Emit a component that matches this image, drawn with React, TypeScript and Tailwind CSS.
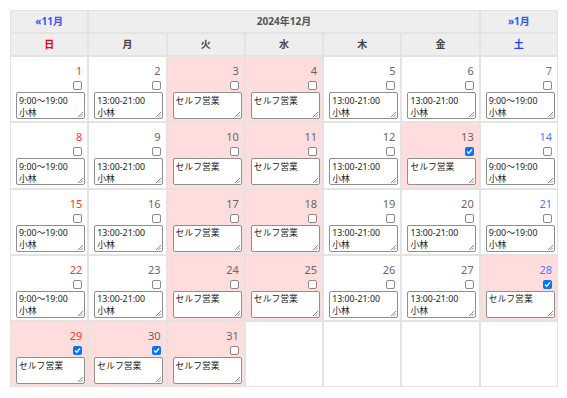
import React from "react";

type Day = {
  date: number;
  note: string[];
  self: boolean;
  checked: boolean;
};

const SELF_DAYS = [3, 4, 10, 11, 13, 17, 18, 24, 25, 28, 29, 30, 31];
const CHECKED_DAYS = [13, 28, 29, 30];

const buildDays = (): (Day | null)[] => {
  const days: (Day | null)[] = [];
  for (let d = 1; d <= 31; d++) {
    const dow = (d - 1) % 7; // 2024/12/1 is a Sunday
    const self = SELF_DAYS.includes(d);
    const weekend = dow === 0 || dow === 6;
    days.push({
      date: d,
      self,
      checked: CHECKED_DAYS.includes(d),
      note: self ? ["セルフ営業"] : [weekend ? "9:00～19:00" : "13:00-21:00", "小林"],
    });
  }
  while (days.length < 35) days.push(null);
  return days;
};

const WEEK = ["日", "月", "火", "水", "木", "金", "土"];

const Checkbox = ({ checked }: { checked: boolean }) =>
  checked ? (
    <span className="flex h-[9px] w-[9px] items-center justify-center rounded-[2px] bg-[#0075ff]">
      <svg width="7" height="7" viewBox="0 0 7 7">
        <path d="M1 3.6 L2.8 5.3 L6 1.5" stroke="white" strokeWidth="1.4" fill="none" />
      </svg>
    </span>
  ) : (
    <span className="block h-[9px] w-[9px] rounded-[2px] border border-[#8a8a8a] bg-white" />
  );

const NoteBox = ({ lines }: { lines: string[] }) => (
  <div className="relative mt-[2px] h-[27px] w-[69px] rounded-[2px] border border-[#8f8f8f] bg-white px-[2px] pt-[1.5px] text-[8.8px] leading-[12px] text-[#222]">
    {lines.map((l) => (
      <div key={l}>{l}</div>
    ))}
    <svg className="absolute bottom-px right-px" width="6" height="6" viewBox="0 0 6 6">
      <path d="M1 6 L6 1 M3.5 6 L6 3.5" stroke="#7a7a7a" strokeWidth="0.9" />
    </svg>
  </div>
);

export default function App() {
  const days = buildDays();

  return (
    <div className="h-[398px] w-[567px] bg-white font-['Noto_Sans','Noto_Sans_CJK_JP',sans-serif]">
      <div className="ml-[10px] pt-[10px]">
        <div className="grid w-[548px] grid-cols-7 grid-rows-[21px_21px_repeat(5,64.3px)] gap-[2px] bg-[#e3e3e3] p-px">
          {/* nav row */}
          <div className="flex items-center justify-center bg-[#eeeeee] text-[10px] font-bold text-[#3355ee]">
            «11月
          </div>
          <div className="col-span-5 flex items-center justify-center bg-[#eeeeee] text-[10px] font-bold text-[#555]">
            2024年12月
          </div>
          <div className="flex items-center justify-center bg-[#eeeeee] text-[10px] font-bold text-[#3355ee]">
            »1月
          </div>

          {/* weekday row */}
          {WEEK.map((w, i) => (
            <div
              key={w}
              className={`flex items-center justify-center bg-[#eeeeee] text-[10px] font-bold ${
                i === 0 ? "text-[#ee0000]" : i === 6 ? "text-[#2244ee]" : "text-[#444]"
              }`}
            >
              {w}
            </div>
          ))}

          {/* days */}
          {days.map((day, i) => {
            if (!day) return <div key={`e${i}`} className="bg-white" />;
            const dow = i % 7;
            const numColor =
              dow === 0 ? "text-[#ff3333]" : dow === 6 ? "text-[#5577ff]" : "text-[#666]";
            return (
              <div
                key={day.date}
                className={`flex flex-col pl-[5px] pr-[5px] pt-[8px] ${
                  day.self ? "bg-[#ffdddd]" : "bg-white"
                }`}
              >
                <div className={`text-right text-[11px] leading-none ${numColor}`}>{day.date}</div>
                <div className="mt-[5px] flex justify-end">
                  <Checkbox checked={day.checked} />
                </div>
                <NoteBox lines={day.note} />
              </div>
            );
          })}
        </div>
      </div>
    </div>
  );
}
